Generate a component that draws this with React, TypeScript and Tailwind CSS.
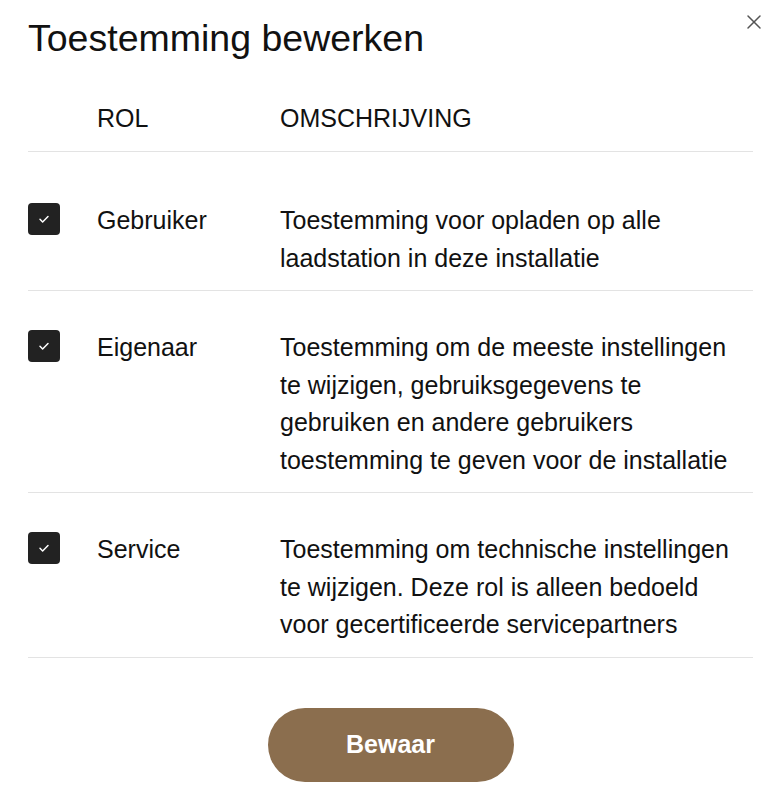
import { X } from 'lucide-react';

const roles = [
  { name: 'Gebruiker', desc: 'Toestemming voor opladen op alle laadstation in deze installatie' },
  {
    name: 'Eigenaar',
    desc: 'Toestemming om de meeste instellingen te wijzigen, gebruiksgegevens te gebruiken en andere gebruikers toestemming te geven voor de installatie',
  },
  {
    name: 'Service',
    desc: 'Toestemming om technische instellingen te wijzigen. Deze rol is alleen bedoeld voor gecertificeerde servicepartners',
  },
];

function Checkbox() {
  return (
    <div className="w-8 h-8 rounded-[4px] bg-[#222222] flex items-center justify-center">
      <svg width="16" height="16" viewBox="0 0 14 14" fill="none">
        <path d="M3.5 7.3l2.3 2.3L10.5 4.8" stroke="white" strokeWidth="1.3" strokeLinecap="round" strokeLinejoin="round" />
      </svg>
    </div>
  );
}

export default function App() {
  return (
    <div className="w-[781px] h-[800px] bg-white relative px-7 font-['Liberation_Sans',Arial,sans-serif] text-[#111111]">
      <button className="absolute right-[15px] top-[10px] text-[#555555]">
        <X className="w-6 h-6" strokeWidth={1.5} />
      </button>
      <h1 className="pt-[17px] text-[37.5px] leading-[42px]">Toestemming bewerken</h1>

      <div className="mt-[40px] grid grid-cols-[69px_183px_1fr] border-b border-[#e3e3e3] pb-[14px] text-[25px] leading-[38px]">
        <div />
        <div>ROL</div>
        <div>OMSCHRIJVING</div>
      </div>

      <div className="mt-[12px]">
        {roles.map((r) => (
          <div
            key={r.name}
            className="grid grid-cols-[69px_183px_1fr] pt-[38px] pb-[13px] border-b border-[#e3e3e3] text-[25px] leading-[37.5px]"
          >
            <div className="pt-[1px]">
              <Checkbox />
            </div>
            <div>{r.name}</div>
            <div>{r.desc}</div>
          </div>
        ))}
      </div>

      <div className="flex justify-center mt-[50px]">
        <button className="w-[246px] h-[74px] rounded-full bg-[#8b6e4e] text-white font-bold text-[25px]">
          Bewaar
        </button>
      </div>
    </div>
  );
}
